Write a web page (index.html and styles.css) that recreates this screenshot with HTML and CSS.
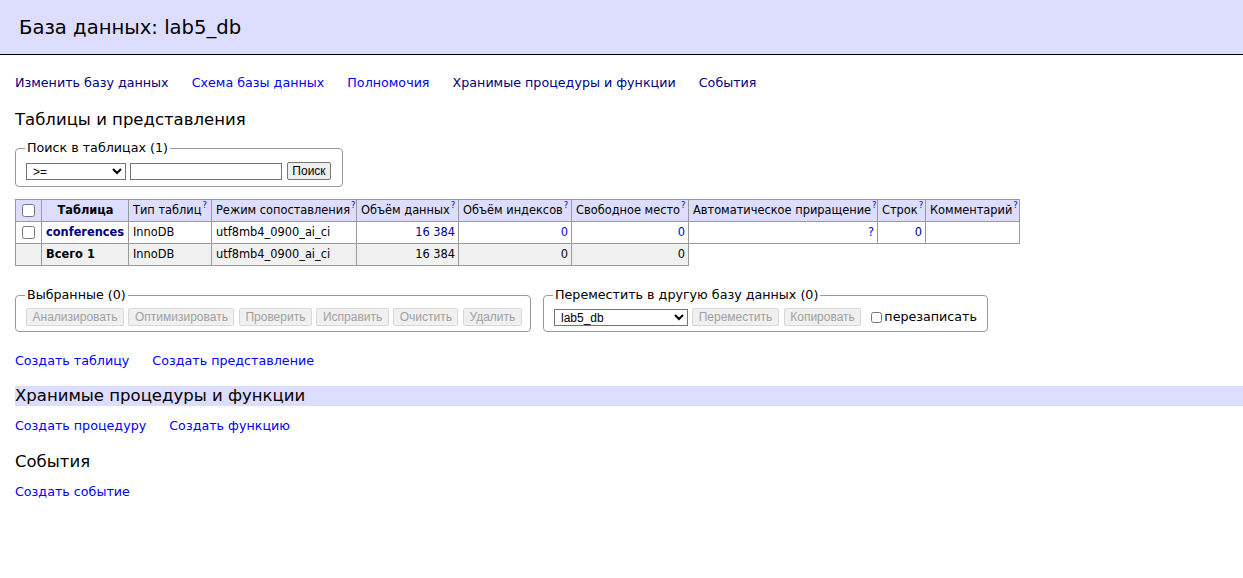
FILE: index.html
```html
<!DOCTYPE html>
<html lang="ru">
<head>
<meta charset="utf-8">
<title>lab5_db</title>
<link rel="stylesheet" href="styles.css">
</head>
<body>
<h2 class="page-title">База данных: lab5_db</h2>
<div class="content">
  <p class="links">
    <a href="#" class="visited">Изменить базу данных</a>
    <a href="#">Схема базы данных</a>
    <a href="#">Полномочия</a>
    <a href="#" class="visited">Хранимые процедуры и функции</a>
    <a href="#" class="visited">События</a>
  </p>
  <h3 class="section">Таблицы и представления</h3>
  <fieldset class="box search-box">
    <legend>Поиск в таблицах (1)</legend>
    <div class="row">
      <select class="ctl sel-op"><option>&gt;=</option></select>
      <input type="text" class="ctl txt">
      <button type="button" class="btn btn-search">Поиск</button>
    </div>
  </fieldset>

  <table class="tables">
    <colgroup>
      <col class="w-check"><col class="w-name"><col class="w-engine"><col class="w-coll"><col class="w-data">
      <col class="w-index"><col class="w-free"><col class="w-auto"><col class="w-rows"><col class="w-comment">
    </colgroup>
    <thead>
      <tr>
        <td class="center"><input type="checkbox" class="chk"></td>
        <th>Таблица</th>
        <td>Тип таблиц<sup>?</sup></td>
        <td>Режим сопоставления<sup>?</sup></td>
        <td>Объём данных<sup>?</sup></td>
        <td>Объём индексов<sup>?</sup></td>
        <td>Свободное место<sup>?</sup></td>
        <td>Автоматическое приращение<sup>?</sup></td>
        <td>Строк<sup>?</sup></td>
        <td>Комментарий<sup>?</sup></td>
      </tr>
    </thead>
    <tbody>
      <tr>
        <td class="center"><input type="checkbox" class="chk"></td>
        <th class="name"><a href="#" class="visited">conferences</a></th>
        <td>InnoDB</td>
        <td>utf8mb4_0900_ai_ci</td>
        <td class="num"><a href="#" class="dark">16&nbsp;384</a></td>
        <td class="num"><a href="#">0</a></td>
        <td class="num"><a href="#">0</a></td>
        <td class="num"><a href="#">?</a></td>
        <td class="num"><a href="#" class="visited">0</a></td>
        <td></td>
      </tr>
      <tr class="total">
        <td></td>
        <th class="name">Всего 1</th>
        <td>InnoDB</td>
        <td>utf8mb4_0900_ai_ci</td>
        <td class="num">16&nbsp;384</td>
        <td class="num">0</td>
        <td class="num">0</td>
      </tr>
    </tbody>
  </table>

  <div class="actions">
    <fieldset class="box selected-box">
      <legend>Выбранные (0)</legend>
      <div class="row">
        <button type="button" class="btn" disabled>Анализировать</button>
        <button type="button" class="btn" disabled>Оптимизировать</button>
        <button type="button" class="btn" disabled>Проверить</button>
        <button type="button" class="btn" disabled>Исправить</button>
        <button type="button" class="btn" disabled>Очистить</button>
        <button type="button" class="btn" disabled>Удалить</button>
      </div>
    </fieldset>
    <fieldset class="box move-box">
      <legend>Переместить в другую базу данных (0)</legend>
      <div class="row">
        <select class="ctl sel-db"><option>lab5_db</option></select>
        <button type="button" class="btn" disabled>Переместить</button>
        <button type="button" class="btn" disabled>Копировать</button>
        <label class="overwrite"><input type="checkbox" class="chk">перезаписать</label>
      </div>
    </fieldset>
  </div>

  <p class="links links-create">
    <a href="#">Создать таблицу</a>
    <a href="#">Создать представление</a>
  </p>

  <h3 class="section target">Хранимые процедуры и функции</h3>
  <p class="links links-tight">
    <a href="#">Создать процедуру</a>
    <a href="#">Создать функцию</a>
  </p>

  <h3 class="section events">События</h3>
  <p class="links links-tight">
    <a href="#">Создать событие</a>
  </p>
</div>
</body>
</html>
```
FILE: styles.css
```css
html, body {
  margin: 0;
  padding: 0;
  background: #fff;
}
body {
  color: #000;
  font: 12.7px/1.25 "DejaVu Sans", Verdana, sans-serif;
}
a {
  color: #0000ff;
  text-decoration: none;
}
a.visited {
  color: #000080;
}
a.dark {
  color: #000099;
}

.page-title {
  margin: 0 0 20px;
  padding: 15px 19px 14px;
  font-size: 19.6px;
  line-height: 25px;
  font-weight: normal;
  background: #ddf;
  border-bottom: 1px solid #000;
}

.content {
  padding: 0 0 20px 15px;
}

.links {
  margin: 0;
  line-height: 16px;
}
.links a {
  white-space: nowrap;
  margin-right: 19px;
}

.section {
  font-weight: normal;
  font-size: 16.5px;
  line-height: 21px;
  margin: 18px 0 0;
}

.box {
  display: inline-block;
  vertical-align: top;
  margin: 10px 0 0 0;
  padding: 5px 10px 5px 10px;
  border: 1px solid #9a9a9a;
  border-radius: 4px;
  min-inline-size: 0;
  box-sizing: border-box;
}
.box legend {
  padding: 0 2px;
  margin-left: -1px;
  line-height: 16px;
}
.row {
  display: flex;
  align-items: center;
  white-space: nowrap;
}

.ctl {
  font: 12px "Liberation Sans", Arial, sans-serif;
  box-sizing: border-box;
  height: 17px;
  border: 1px solid #767676;
  border-radius: 0;
  background: #fff;
  color: #000;
  padding: 0 2px;
  margin: 0;
}
.sel-op { width: 100px; }
.txt { width: 152px; margin-left: 4px; }
.sel-db { width: 136px; }

.btn {
  font: 12px "Liberation Sans", Arial, sans-serif;
  box-sizing: border-box;
  height: 18px;
  padding: 0 5.5px;
  margin: 0;
  border: 1px solid #767676;
  border-radius: 2px;
  background: #efefef;
  color: #000;
}
.btn:disabled {
  color: #a0a0a0;
  border-color: #d8d8d8;
  background: #f0f0f0;
}

.search-box {
  width: 328px;
  padding-top: 6px;
  padding-bottom: 6px;
}
.btn-search {
  margin-left: 5px;
  width: 44px;
  padding: 0;
}

.tables {
  margin: 12px 0 0;
  border-collapse: collapse;
  table-layout: fixed;
  width: 1004px;
  font-size: 11.4px;
}
.w-check { width: 26px; }
.w-name { width: 87px; }
.w-engine { width: 83px; }
.w-coll { width: 145px; }
.w-data { width: 102px; }
.w-index { width: 113px; }
.w-free { width: 117px; }
.w-auto { width: 189px; }
.w-rows { width: 48px; }
.w-comment { width: 94px; }

.tables td, .tables th {
  border: 1px solid #999;
  padding: 2px 3px 2px 4px;
  height: 17px;
  line-height: 17px;
  white-space: nowrap;
  overflow: hidden;
  text-align: left;
}
.tables thead td, .tables thead th {
  background: #ddf;
}
.tables thead th {
  text-align: center;
}
.tables .center {
  text-align: center;
  padding: 2px 0;
}
.tables th.name {
  font-weight: bold;
  background: #fff;
}
.tables sup {
  font-size: 8.5px;
  line-height: 0;
  color: #0000ff;
  vertical-align: 6px;
  margin-left: 1px;
}
.tables .num {
  text-align: right;
}
.tables tr.total td, .tables tr.total th {
  background: #f0f0f0;
}
.chk {
  width: 13px;
  height: 13px;
  margin: 0;
  vertical-align: middle;
}

.actions {
  display: flex;
  align-items: flex-start;
  gap: 12px;
  margin-top: 11px;
}
.selected-box {
  width: 516px;
}
.selected-box .btn + .btn {
  margin-left: 4.5px;
}
.move-box {
  width: 445px;
}
.move-box .btn {
  margin-left: 4px;
}
.move-box .btn + .btn {
  margin-left: 5px;
}
.overwrite {
  display: flex;
  align-items: center;
  margin-left: 10px;
  white-space: nowrap;
}
.overwrite .chk {
  margin: 0 2px 0 0;
  width: 11px;
  height: 11px;
}

.links-create {
  margin-top: 21px;
}

.target {
  background: #ddf;
  margin-top: 17px;
  line-height: 20px;
}
.links-tight {
  margin-top: 12px;
}
.events {
  margin-top: 17px;
}
```
